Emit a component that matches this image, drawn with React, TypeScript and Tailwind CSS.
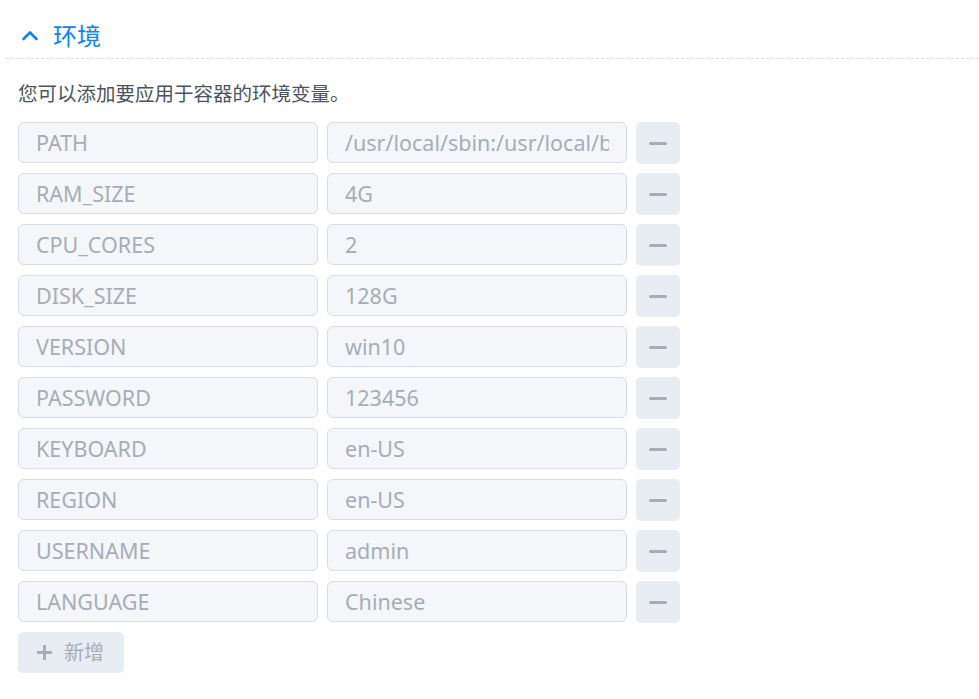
import React from "react";

const rows: [string, string][] = [
  ["PATH", "/usr/local/sbin:/usr/local/bin:/usr/sbin:/usr/bin:/sbin:/bin"],
  ["RAM_SIZE", "4G"],
  ["CPU_CORES", "2"],
  ["DISK_SIZE", "128G"],
  ["VERSION", "win10"],
  ["PASSWORD", "123456"],
  ["KEYBOARD", "en-US"],
  ["REGION", "en-US"],
  ["USERNAME", "admin"],
  ["LANGUAGE", "Chinese"],
];

const font = {
  fontFamily: '"Noto Sans", "Noto Sans CJK SC", sans-serif',
};

export default function App() {
  return (
    <div className="w-[979px] h-[699px] bg-white overflow-hidden" style={font}>
      <div className="pt-[21px] pl-[6px]">
        <div className="flex items-center h-[30px] pl-[15px]">
          <svg width="18" height="18" viewBox="0 0 18 18" className="mr-[14px]">
            <path d="M2.5 12 L9 5.5 L15.5 12" fill="none" stroke="#0a84f0" strokeWidth="2.6" strokeLinecap="round" strokeLinejoin="round" />
          </svg>
          <span className="text-[24px] leading-none text-[#0a84f0]">环境</span>
        </div>
        <div className="mt-[7px] border-t border-dashed border-[#d8dfe8]" />
      </div>
      <div className="px-[18px]">
        <p className="mt-[23px] text-[19.5px] leading-[24px] text-[#4b5361]">
          您可以添加要应用于容器的环境变量。
        </p>
        <div className="mt-[16px] flex flex-col gap-[10px]">
          {rows.map(([k, v]) => (
            <div key={k} className="flex items-start gap-[9px] h-[41px]">
              <input
                readOnly
                placeholder={k}
                className="w-[300px] h-[41px] rounded-[6px] border border-[#d5dde8] bg-[#f4f6fa] px-[17px] text-[21.5px] placeholder:text-[#a6adb7] outline-none"
              />
              <input
                readOnly
                placeholder={v}
                className="w-[300px] h-[41px] rounded-[6px] border border-[#d5dde8] bg-[#f4f6fa] px-[17px] text-[21.5px] placeholder:text-[#a6adb7] outline-none"
              />
              <button className="w-[44px] h-[42px] shrink-0 rounded-[5px] bg-[#e8ecf3] flex items-center justify-center">
                <span className="block w-[18px] h-[3px] rounded-full bg-[#a6adb8]" />
              </button>
            </div>
          ))}
        </div>
        <button className="mt-[10px] w-[106px] h-[41px] rounded-[5px] bg-[#e8ecf3] flex items-center pl-[18px] gap-[11px] text-[20px] text-[#a6adb7]">
          <svg width="17" height="17" viewBox="0 0 17 17">
            <path d="M8.5 1 V16 M1 8.5 H16" stroke="#a6adb8" strokeWidth="3" />
          </svg>
          <span>新增</span>
        </button>
      </div>
    </div>
  );
}
